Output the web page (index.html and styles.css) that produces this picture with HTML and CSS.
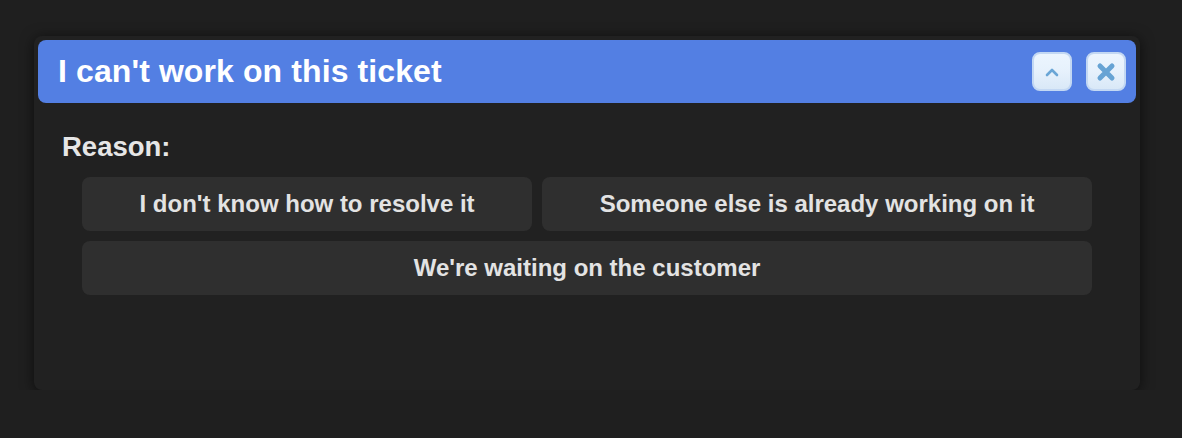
FILE: index.html
```html
<!DOCTYPE html>
<html>
<head>
<meta charset="utf-8">
<link rel="stylesheet" href="styles.css">
</head>
<body>
<div class="window">
  <div class="header">
    <h1 class="title">I can't work on this ticket</h1>
    <div class="tools">
      <button class="tool" aria-label="Collapse">
        <svg width="14" height="10" viewBox="0 0 14 10"><polyline points="2,8 7,3 12,8" fill="none" stroke="#6aa6d6" stroke-width="2.6" stroke-linecap="round" stroke-linejoin="round"/></svg>
      </button>
      <button class="tool" aria-label="Close">
        <svg width="20" height="20" viewBox="0 0 20 20"><path d="M4 4 L16 16 M16 4 L4 16" fill="none" stroke="#66a3d4" stroke-width="5" stroke-linecap="round"/></svg>
      </button>
    </div>
  </div>
  <div class="body">
    <div class="label">Reason:</div>
    <div class="options">
      <button class="option">I don't know how to resolve it</button>
      <button class="option">Someone else is already working on it</button>
      <button class="option">We're waiting on the customer</button>
    </div>
  </div>
</div>
</body>
</html>
```
FILE: styles.css
```css
html, body {
  margin: 0;
  padding: 0;
  background: #1f1f1f;
  font-family: "Liberation Sans", Arial, Helvetica, sans-serif;
}
body {
  padding: 36px 0 0 34px;
}
.window {
  width: 1106px;
  height: 354px;
  box-sizing: border-box;
  padding: 4px;
  background: #212121;
  border-radius: 8px;
  box-shadow: 0 2px 14px rgba(0,0,0,0.6);
}
.header {
  height: 63px;
  box-sizing: border-box;
  background: #537fe3;
  border-radius: 8px;
  display: flex;
  align-items: center;
  justify-content: space-between;
  padding: 0 10px 0 20px;
}
.title {
  margin: 0;
  font-size: 32px;
  font-weight: bold;
  color: #ffffff;
  letter-spacing: 0.1px;
}
.tools {
  display: flex;
  gap: 14px;
}
.tool {
  width: 40px;
  height: 39px;
  box-sizing: border-box;
  padding: 0;
  border: 2px solid #c3d8f3;
  border-radius: 8px;
  background: linear-gradient(#ecf5fe 0%, #e6f1fc 50%, #d9e8f7 100%);
  display: flex;
  align-items: center;
  justify-content: center;
}
.body {
  padding: 28px 0 0 0;
}
.label {
  margin-left: 24px;
  font-size: 27.5px;
  font-weight: bold;
  color: #e6e6e6;
}
.options {
  margin: 14px 44px 0 44px;
  display: flex;
  flex-wrap: wrap;
  gap: 10px;
}
.option {
  flex: 1 1 auto;
  height: 54px;
  padding: 0 20px;
  border: none;
  border-radius: 8px;
  background: #2f2f2f;
  color: #e3e3e3;
  font-family: "Liberation Sans", Arial, Helvetica, sans-serif;
  font-size: 24px;
  font-weight: bold;
}
```
